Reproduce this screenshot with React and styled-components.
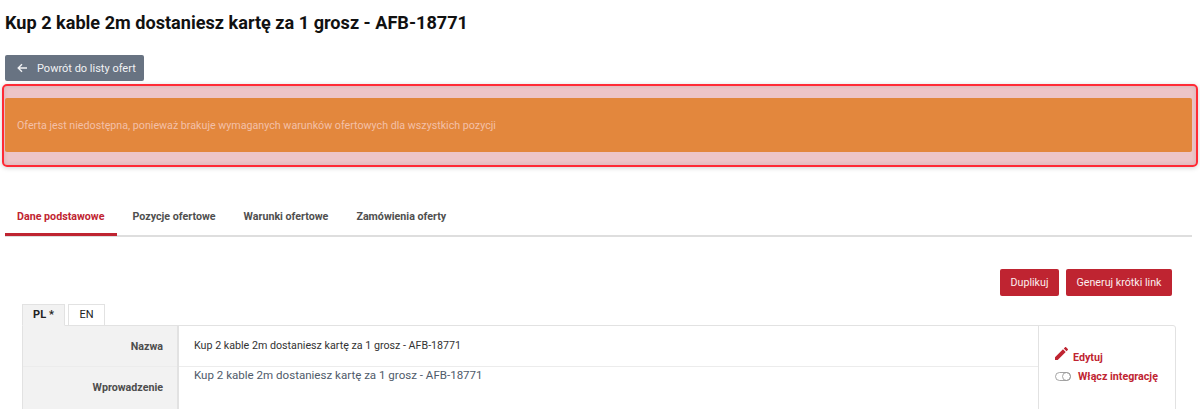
import React from 'react';
import styled, { createGlobalStyle } from 'styled-components';

const GlobalStyle = createGlobalStyle`
  html, body {
    margin: 0;
    padding: 0;
    height: 409px;
    overflow: hidden;
    background: #fff;
    font-family: Roboto, "Liberation Sans", sans-serif;
  }
`;

const Page = styled.div`
  padding: 0 8px 0 5px;
  height: 409px;
  overflow: hidden;
  box-sizing: border-box;
`;

const Title = styled.h1`
  margin: 0;
  padding-top: 11px;
  height: 55px;
  box-sizing: border-box;
  font-size: 18.12px;
  line-height: 24px;
  font-weight: 700;
  color: #111;
`;

const BackButton = styled.button`
  display: flex;
  align-items: center;
  gap: 9px;
  width: 139px;
  height: 26px;
  padding: 0 0 0 12px;
  border: 0;
  border-radius: 2px;
  background: #687382;
  color: #f1f2f4;
  white-space: nowrap;
  font: 400 11px Roboto, sans-serif;
`;

const Highlight = styled.div`
  position: relative;
  margin-top: 17px;
  height: 54px;
  &::before {
    content: '';
    position: absolute;
    left: -3px;
    right: -6px;
    top: -14px;
    bottom: -15px;
    border: 2px solid #ff2a35;
    border-radius: 5px;
    background: rgba(190, 40, 50, 0.27);
    box-shadow: 0 1px 5px rgba(0, 0, 0, 0.18), inset 0 0 5px rgba(0, 0, 0, 0.1);
  }
`;

const Alert = styled.div`
  position: relative;
  display: flex;
  align-items: center;
  height: 54px;
  padding-left: 12px;
  border-radius: 2px;
  background: #e3873d;
  color: #f3c0a8;
  font-size: 10.7px;
`;

const Tabs = styled.nav`
  display: flex;
  height: 28px;
  margin-top: 55px;
  border-bottom: 2px solid #dedede;
`;

const Tab = styled.a`
  display: block;
  box-sizing: border-box;
  height: 29px;
  padding: 0 ${(p) => p.$pad}px 0 ${(p) => p.$left}px;
  line-height: 20px;
  font-size: 10.7px;
  font-weight: 700;
  color: ${(p) => (p.$active ? '#bf2431' : '#4f4f4f')};
  border-bottom: 3px solid ${(p) => (p.$active ? '#bf2431' : 'transparent')};
`;

const Actions = styled.div`
  display: flex;
  justify-content: flex-end;
  gap: 7px;
  margin-top: 32px;
  padding-right: 20px;
`;

const RedButton = styled.button`
  height: 27px;
  width: ${(p) => p.$w}px;
  padding: 0;
  border: 0;
  border-radius: 2px;
  background: #bf2431;
  color: #fbeeee;
  font: 400 10.7px Roboto, sans-serif;
`;

const LangRow = styled.div`
  display: flex;
  gap: 3px;
  margin: 8px 0 0 17px;
`;

const Lang = styled.div`
  box-sizing: border-box;
  width: ${(p) => p.$w}px;
  height: 22px;
  margin-bottom: -1px;
  position: relative;
  border: 1px solid #e2e2e2;
  border-bottom-color: ${(p) => (p.$active ? '#f2f2f2' : '#e2e2e2')};
  background: ${(p) => (p.$active ? '#f2f2f2' : '#fff')};
  text-align: center;
  line-height: 19px;
  font-size: 11px;
  font-weight: ${(p) => (p.$active ? 700 : 400)};
  color: #222;
`;

const Table = styled.div`
  display: grid;
  grid-template-columns: 156px 1fr 137px;
  margin-left: 17px;
  width: 1154px;
  height: 120px;
  box-sizing: border-box;
  border: 1px solid #e2e2e2;
  border-radius: 0 3px 0 0;
`;

const Labels = styled.div`
  background: #f2f2f2;
  border-right: 2px solid #e2e2e2;
`;

const Label = styled.div`
  box-sizing: border-box;
  height: ${(p) => p.$h}px;
  padding: ${(p) => p.$top}px 14px 0 0;
  text-align: right;
  font-size: 10.7px;
  line-height: 14px;
  font-weight: 700;
  color: #4d4d4d;
  border-bottom: ${(p) => (p.$line ? '1px solid #ececec' : '0')};
`;

const Values = styled.div`
  min-width: 0;
`;

const NameValue = styled.div`
  box-sizing: border-box;
  height: 41px;
  padding: 13px 0 0 15px;
  font-size: 10.7px;
  line-height: 14px;
  color: #333;
  border-bottom: 1px solid #ececec;
`;

const IntroValue = styled.div`
  padding: 0 0 0 15px;
  font-size: 11.55px;
  line-height: 16px;
  color: #4f5b6a;
`;

const Side = styled.div`
  border-left: 1px solid #e2e2e2;
  padding: 22px 0 0 16px;
`;

const SideLink = styled.div`
  display: flex;
  align-items: center;
  gap: ${(p) => p.$gap}px;
  height: ${(p) => p.$h}px;
  font-size: 10.7px;
  font-weight: 700;
  color: #bf2431;
`;

const PencilIcon = styled.svg`
  margin-bottom: 8px;
`;

export default function App() {
  return (
    <Page>
      <GlobalStyle />
      <Title>Kup 2 kable 2m dostaniesz kartę za 1 grosz - AFB-18771</Title>
      <BackButton>
        <svg width="11" height="10" viewBox="0 0 11 10" fill="none" stroke="#f1f2f4" strokeWidth="1.4">
          <path d="M10 5H1.5M5 1.2 1.2 5 5 8.8" />
        </svg>
        Powrót do listy ofert
      </BackButton>
      <Highlight>
        <Alert>Oferta jest niedostępna, ponieważ brakuje wymaganych warunków ofertowych dla wszystkich pozycji</Alert>
      </Highlight>
      <Tabs>
        <Tab $active $left={12} $pad={13}>Dane podstawowe</Tab>
        <Tab $left={15} $pad={13}>Pozycje ofertowe</Tab>
        <Tab $left={15} $pad={13}>Warunki ofertowe</Tab>
        <Tab $left={15} $pad={13}>Zamówienia oferty</Tab>
      </Tabs>
      <Actions>
        <RedButton $w={59}>Duplikuj</RedButton>
        <RedButton $w={106}>Generuj krótki link</RedButton>
      </Actions>
      <LangRow>
        <Lang $active $w={43}>PL *</Lang>
        <Lang $w={37}>EN</Lang>
      </LangRow>
      <Table>
        <Labels>
          <Label $h={41} $top={14} $line>Nazwa</Label>
          <Label $h={60} $top={14}>Wprowadzenie</Label>
        </Labels>
        <Values>
          <NameValue>Kup 2 kable 2m dostaniesz kartę za 1 grosz - AFB-18771</NameValue>
          <IntroValue>Kup 2 kable 2m dostaniesz kartę za 1 grosz - AFB-18771</IntroValue>
        </Values>
        <Side>
          <SideLink $gap={5} $h={18}>
            <PencilIcon width="13" height="13" viewBox="3 3 18 18" fill="#bf2431">
              <path d="M3 17.25V21h3.75L17.81 9.94l-3.75-3.75L3 17.25zM20.71 7.04c.39-.39.39-1.02 0-1.41l-2.34-2.34c-.39-.39-1.02-.39-1.41 0l-1.83 1.83 3.75 3.75 1.83-1.83z" />
            </PencilIcon>
            Edytuj
          </SideLink>
          <SideLink $gap={7} $h={20}>
            <svg width="16" height="9" viewBox="0 0 16 9" fill="none" stroke="#9a9a9a" strokeWidth="0.9">
              <rect x="0.5" y="0.5" width="15" height="8" rx="4" />
              <circle cx="11.5" cy="4.5" r="4" />
            </svg>
            Włącz integrację
          </SideLink>
        </Side>
      </Table>
    </Page>
  );
}
